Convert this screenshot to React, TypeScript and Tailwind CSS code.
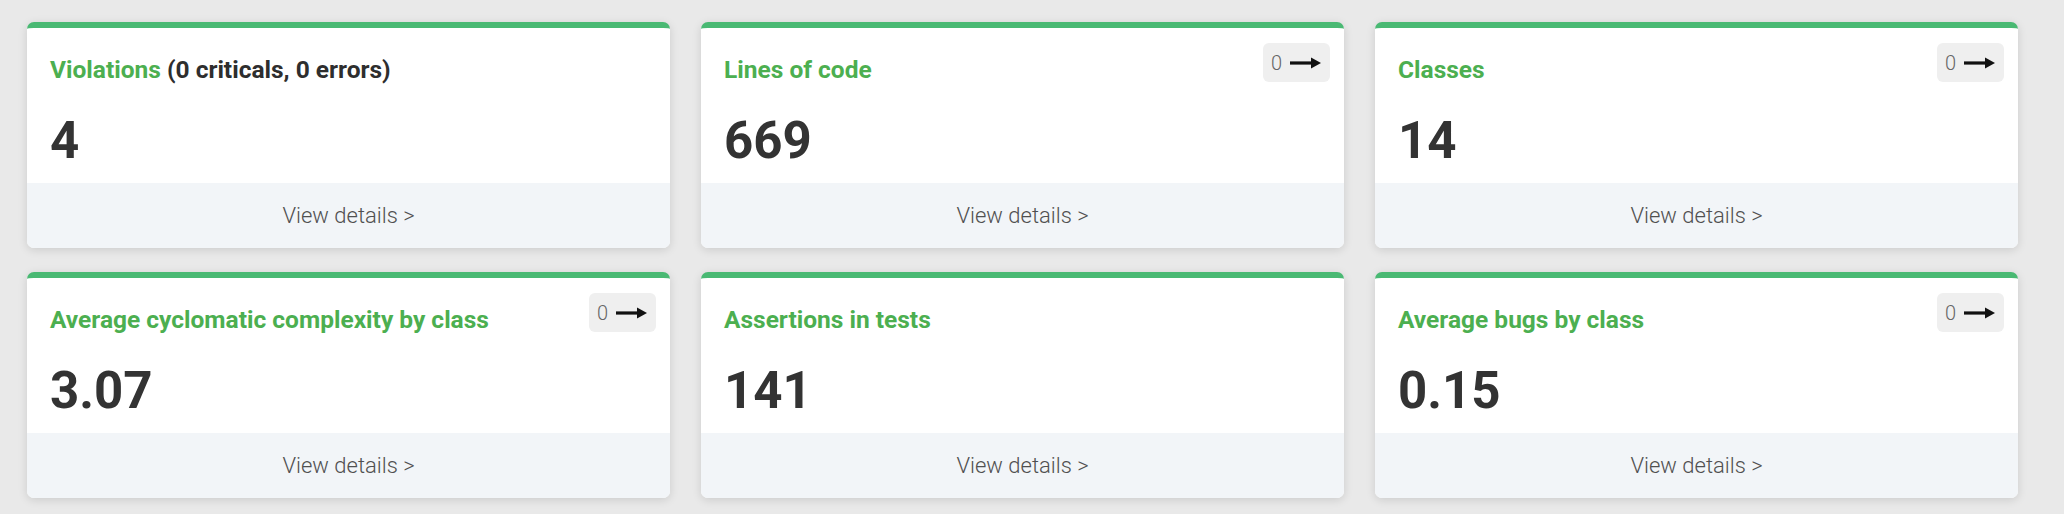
type Metric = {
  title: string
  extra?: string
  value: string
  trend?: number
}

const metrics: Metric[] = [
  { title: 'Violations', extra: '(0 criticals, 0 errors)', value: '4' },
  { title: 'Lines of code', value: '669', trend: 0 },
  { title: 'Classes', value: '14', trend: 0 },
  { title: 'Average cyclomatic complexity by class', value: '3.07', trend: 0 },
  { title: 'Assertions in tests', value: '141' },
  { title: 'Average bugs by class', value: '0.15', trend: 0 }
]

const ArrowRight = () => (
  <svg width="31" height="12" viewBox="0 0 31 12" className="block">
    <rect x="0" y="4.4" width="23" height="3.2" fill="#111" />
    <polygon points="21,0.5 31,6 21,11.5" fill="#111" />
  </svg>
)

const TrendBadge = ({ value }: { value: number }) => (
  <div className="absolute top-[15px] right-[14px] flex h-[39px] w-[67px] items-center gap-[8px] rounded-[6px] bg-[#efefef] pl-[8px]">
    <span className="text-[20px] font-light leading-none text-[#666]">{value}</span>
    <ArrowRight />
  </div>
)

const MetricCard = ({ metric }: { metric: Metric }) => (
  <div className="relative flex h-[226px] flex-col overflow-hidden rounded-[7px] border-t-[6px] border-[#49b973] bg-white shadow-[0_2px_10px_rgba(0,0,0,0.13)]">
    {metric.trend !== undefined && <TrendBadge value={metric.trend} />}
    <div className="flex-1 px-[23px] pt-[28px]">
      <h3 className="text-[24.5px] font-bold leading-[28px] text-[#4caf50]">
        {metric.title}
        {metric.extra && (
          <span className="text-[#2e2e2e]"> {metric.extra}</span>
        )}
      </h3>
      <div className="mt-[32px] text-[51px] font-bold leading-[50px] text-[#333]">
        {metric.value}
      </div>
    </div>
    <a className="flex h-[65px] items-center justify-center bg-[#f2f5f8] text-[22px] font-light text-[#505050] cursor-pointer">
      View details &gt;
    </a>
  </div>
)

export default function App() {
  return (
    <div
      className="min-h-screen w-full bg-[#e9e9e9]"
      style={{ fontFamily: 'Roboto, "Liberation Sans", sans-serif' }}
    >
      <div className="grid grid-cols-3 gap-x-[31px] gap-y-[24px] pl-[27px] pr-[46px] pt-[22px] pb-[16px]">
        {metrics.map((m) => (
          <MetricCard key={m.title} metric={m} />
        ))}
      </div>
    </div>
  )
}
